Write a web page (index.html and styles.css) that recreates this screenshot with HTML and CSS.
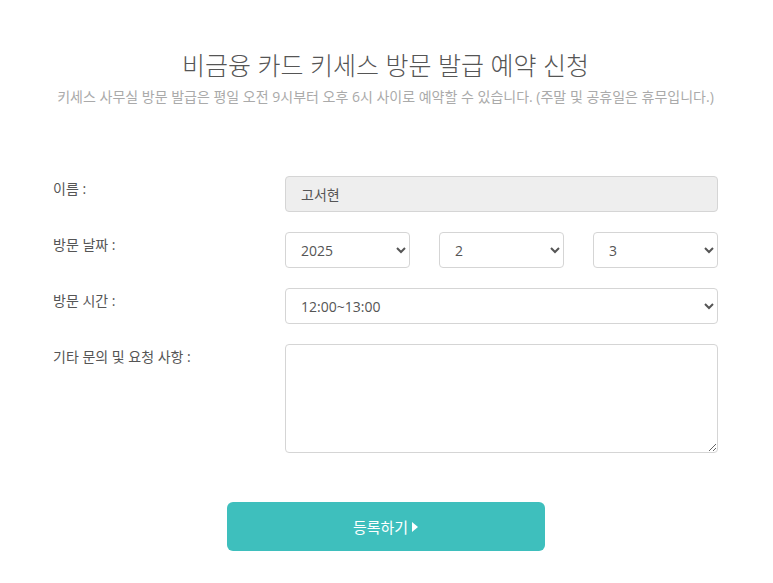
FILE: index.html
```html
<!DOCTYPE html>
<html lang="ko">
<head>
<meta charset="utf-8">
<title>비금융 카드 키세스 방문 발급 예약 신청</title>
<link rel="stylesheet" href="styles.css">
</head>
<body>
<div class="page">
  <header class="head">
    <h1 class="title">비금융 카드 키세스 방문 발급 예약 신청</h1>
    <p class="sub">키세스 사무실 방문 발급은 평일 오전 9시부터 오후 6시 사이로 예약할 수 있습니다. (주말 및 공휴일은 휴무입니다.)</p>
  </header>
  <form class="form">
    <div class="row">
      <label class="label">이름 :</label>
      <div class="ctrl"><input class="field readonly" type="text" value="고서현" readonly></div>
    </div>
    <div class="row">
      <label class="label">방문 날짜 :</label>
      <div class="ctrl dates">
        <select class="field"><option>2025</option></select>
        <select class="field"><option>2</option></select>
        <select class="field"><option>3</option></select>
      </div>
    </div>
    <div class="row">
      <label class="label">방문 시간 :</label>
      <div class="ctrl"><select class="field"><option>12:00~13:00</option></select></div>
    </div>
    <div class="row">
      <label class="label">기타 문의 및 요청 사항 :</label>
      <div class="ctrl"><textarea class="field area"></textarea></div>
    </div>
    <div class="actions">
      <button type="button" class="btn">등록하기<span class="tri"></span></button>
    </div>
  </form>
</div>
</body>
</html>
```
FILE: styles.css
```css
* { box-sizing: border-box; }
html, body { margin: 0; padding: 0; background: #fff; }
body {
  font-family: "Open Sans", "Noto Sans CJK KR", sans-serif;
  color: #555;
  font-size: 14px;
}
.page {
  width: 665px;
  margin-left: 53px;
  padding-top: 48px;
}
.head { text-align: center; }
.title {
  margin: 0;
  font-size: 25px;
  line-height: 35px;
  font-weight: 300;
  color: #555;
  white-space: nowrap;
}
.sub {
  margin: 4px 0 0;
  font-size: 14px;
  line-height: 20px;
  color: #aaa;
  white-space: nowrap;
}
.form {
  margin-top: 69px;
  display: flex;
  flex-direction: column;
  gap: 20px;
}
.row {
  display: grid;
  grid-template-columns: 232px 1fr;
  align-items: start;
}
.label {
  padding-top: 3px;
  line-height: 20px;
  font-size: 14px;
  color: #555;
}
.field {
  display: block;
  width: 100%;
  height: 36px;
  border: 1px solid #d5d5d5;
  border-radius: 4px;
  background: #fff;
  font-family: inherit;
  font-size: 14px;
  color: #555;
  padding: 0 12px;
  outline: none;
}
.readonly { background: #eee; padding-left: 15px; }
select.field { padding-left: 11px; }
.dates {
  display: grid;
  grid-template-columns: 1fr 1fr 1fr;
  gap: 29px;
}
.area {
  height: 109px;
  resize: vertical;
  padding: 8px 12px;
}
.actions {
  display: flex;
  justify-content: center;
  margin-top: 29px;
}
.btn {
  width: 318px;
  height: 49px;
  border: none;
  border-radius: 6px;
  background: #3ebfbd;
  color: #fff;
  font-family: inherit;
  font-size: 15px;
  display: inline-flex;
  align-items: center;
  justify-content: center;
  gap: 2px;
  cursor: pointer;
}
.tri {
  width: 0;
  height: 0;
  border-left: 6px solid #fff;
  border-top: 5px solid transparent;
  border-bottom: 5px solid transparent;
  margin-left: 2px;
}
```
